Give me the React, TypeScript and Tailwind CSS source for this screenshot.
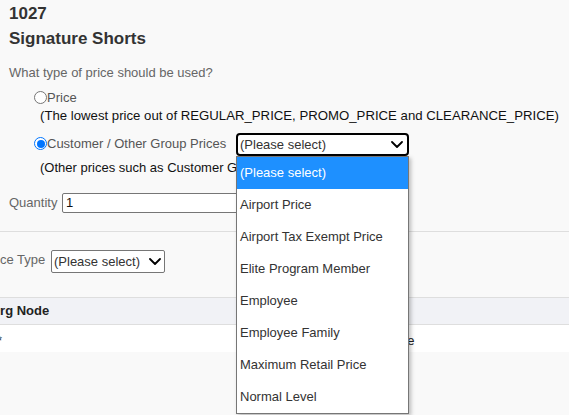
import React from "react"

const options = [
  "(Please select)",
  "Airport Price",
  "Airport Tax Exempt Price",
  "Elite Program Member",
  "Employee",
  "Employee Family",
  "Maximum Retail Price",
  "Normal Level",
]

function Chevron({ className }: { className?: string }) {
  return (
    <svg viewBox="0 0 12 7" className={className} fill="none">
      <path d="M1 1l5 5 5-5" stroke="#000" strokeWidth="1.8" strokeLinecap="round" strokeLinejoin="round" />
    </svg>
  )
}

function Radio({ checked }: { checked?: boolean }) {
  if (checked) {
    return (
      <span className="flex h-[13px] w-[13px] shrink-0 items-center justify-center rounded-full border-[1.5px] border-[#0075ff] bg-white">
        <span className="h-[8px] w-[8px] rounded-full bg-[#0075ff]" />
      </span>
    )
  }
  return <span className="h-[13px] w-[13px] shrink-0 rounded-full border border-[#767676] bg-white" />
}

export default function App() {
  return (
    <div className="relative h-[415px] w-[569px] overflow-hidden bg-[#f9f9f9] font-['Liberation_Sans',Arial,sans-serif] text-[13px] leading-[16px]">
      {/* Heading */}
      <div className="flex h-[27px] items-center pl-[9px] text-[17px] font-bold leading-[20px] text-[#333]">1027</div>
      <div className="flex h-[24px] items-center pl-[9px] text-[17px] font-bold leading-[20px] text-[#333]">
        Signature Shorts
      </div>

      {/* Price type question */}
      <div className="mt-[14px] flex h-[16px] items-center pl-[9px] text-[#666]">What type of price should be used?</div>

      <div className="mt-[8px] flex h-[17px] items-center pl-[34px] text-[#555]">
        <Radio />
        <span>Price</span>
      </div>
      <div className="mt-[2px] flex h-[16px] items-center pl-[40px] text-[13.2px] text-[#111]">
        (The lowest price out of REGULAR_PRICE, PROMO_PRICE and CLEARANCE_PRICE)
      </div>

      <div className="mt-[9px] flex h-[23px] items-center pl-[34px] text-[#555]">
        <span className="-mt-[2px] flex w-[202px] items-center">
          <Radio checked />
          <span>Customer / Other Group Prices</span>
        </span>
        <div className="flex h-[23px] w-[173px] items-center justify-between rounded-[4px] border-2 border-black bg-white pl-[2px] pr-[4px] text-[#333]">
          <span>(Please select)</span>
          <Chevron className="h-[7px] w-[12px]" />
        </div>
      </div>
      <div className="mt-[4px] flex h-[16px] items-center pl-[40px] text-[#111]">
        (Other prices such as Customer Group Price, Employee Price)
      </div>

      {/* Quantity */}
      <div className="mt-[17px] flex h-[20px] items-center pl-[9px]">
        <span className="w-[53px] text-[#666]">Quantity</span>
        <div className="flex h-[20px] w-[230px] items-center rounded-[2px] border border-[#767676] bg-white pl-[3px] text-[#111]">
          1
        </div>
      </div>

      <div className="mt-[18px] border-t border-[#dedede]" />

      {/* Price type */}
      <div className="mt-[18px] flex h-[23px] items-start">
        <span className="-ml-[16px] mt-[2px] w-[67px] text-[#666]">Price Type</span>
        <div className="flex h-[23px] w-[114px] items-center justify-between rounded-[2px] border border-[#767676] bg-white pl-[2px] pr-[3px] text-[#333]">
          <span className="mt-[1px]">(Please select)</span>
          <Chevron className="h-[7px] w-[12px]" />
        </div>
      </div>

      {/* Table */}
      <div className="mt-[24px]">
        <div className="flex h-[28px] items-center border-y border-[#dedede] bg-[#f1f2f6] font-bold text-[#222]">
          <span className="-ml-[10px] w-[353px]">Org Node</span>
          <span>Price Type</span>
        </div>
        <div className="flex h-[27px] items-start bg-white pt-[8px] text-[#222]">
          <span className="-ml-[3px] w-[346px]">*</span>
          <span>Airport Price</span>
        </div>
      </div>

      {/* Open select list */}
      <ul className="absolute left-[236px] top-[156px] w-[173px] border border-[#767676] bg-white text-[#333] shadow-[2px_2px_4px_rgba(0,0,0,0.25)]">
        {options.map((o, i) => (
          <li
            key={o}
            className={
              i === 0
                ? "flex h-[32px] items-center bg-[#1e90ff] pl-[3px] text-white"
                : "flex h-[32px] items-center pl-[3px]"
            }
          >
            {o}
          </li>
        ))}
      </ul>
    </div>
  )
}
